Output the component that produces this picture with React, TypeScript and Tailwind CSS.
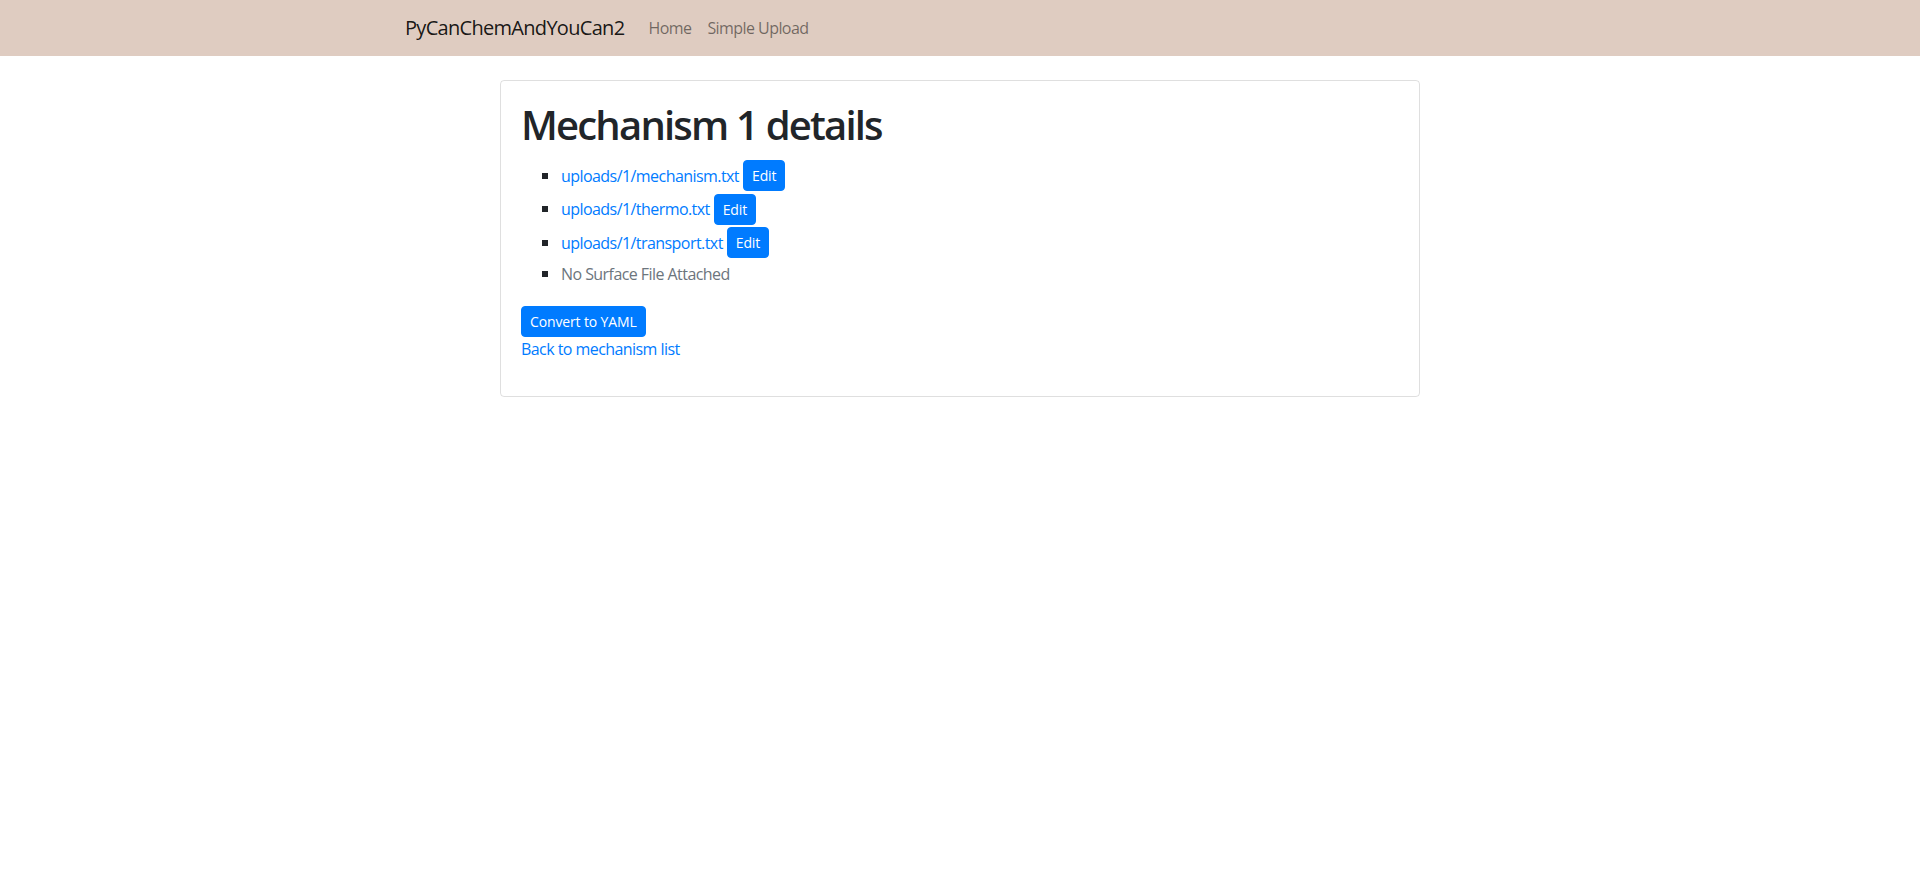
const files = [
  { path: "uploads/1/mechanism.txt" },
  { path: "uploads/1/thermo.txt" },
  { path: "uploads/1/transport.txt" },
];

const Bullet = () => <span className="w-[6px] h-[6px] bg-[#212529] mr-[13px] shrink-0" />;

const btn = "bg-[#007bff] text-white text-sm leading-[21px] tracking-[-0.01em] px-2 py-1 border border-[#007bff] rounded";

const App = () => {
  return (
    <div className="min-h-screen bg-white text-[#212529] font-['Open_Sans',sans-serif] tracking-[-0.035em] text-base leading-6">
      <nav className="bg-[#dfccc1] px-4 py-2">
        <div className="w-[1140px] mx-auto px-[15px] flex items-center">
          <a href="#" className="text-xl leading-[30px] tracking-[-0.035em] py-[5px] mr-4 text-black/90">
            PyCanChemAndYouCan2
          </a>
          <a href="#" className="px-2 py-2 text-black/50">
            Home
          </a>
          <a href="#" className="px-2 py-2 text-black/50">
            Simple Upload
          </a>
        </div>
      </nav>

      <div className="w-[920px] mx-auto mt-6 border border-black/[0.125] rounded">
        <div className="p-5 pb-[35px]">
          <h1 className="text-[40px] leading-[48px] font-semibold tracking-[-0.045em] mb-2">Mechanism 1 details</h1>
          <ul className="pl-[21px] pt-[2px]">
            {files.map((f, i) => (
              <li key={f.path} className={`flex items-center ${i === 1 ? "h-[34px]" : "h-[33px]"}`}>
                <Bullet />
                <a href="#" className="text-[#007bff]">
                  {f.path}
                </a>
                <button className={`ml-1 ${btn}`}>Edit</button>
              </li>
            ))}
            <li className="flex items-center pt-[3px] h-[27px]">
              <Bullet />
              <span className="text-[#6c757d]">No Surface File Attached</span>
            </li>
          </ul>
          <div className="pt-5">
            <button className={btn}>Convert to YAML</button>
          </div>
          <a href="#" className="block text-[#007bff]">
            Back to mechanism list
          </a>
        </div>
      </div>
    </div>
  );
};

export default App;
